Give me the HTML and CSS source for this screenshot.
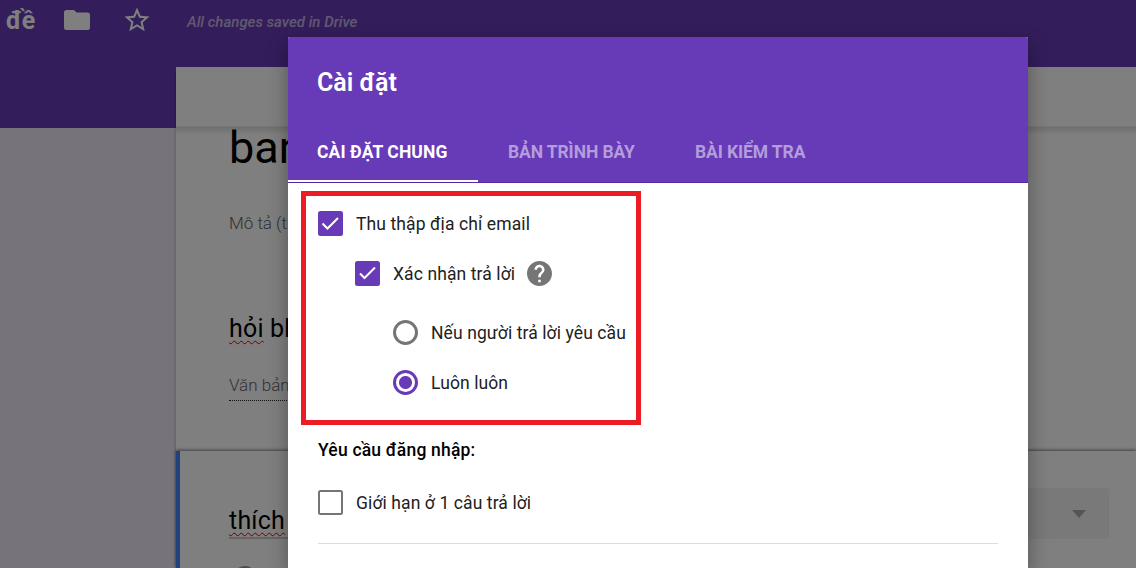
FILE: index.html
```html
<!DOCTYPE html>
<html lang="vi">
<head>
  <meta charset="utf-8">
  <meta name="viewport" content="width=device-width">
  <title>Cài đặt</title>
  <link rel="stylesheet" href="styles.css">
</head>
<body>
  <div class="page">
    <header class="topbar">
      <span class="doc-title">đề</span>
      <svg class="folder" width="26" height="21" viewBox="0 0 26 21">
        <path d="M2.5 0H10l2.6 2.6h10.9A2.5 2.5 0 0 1 26 5.1v12.400a2.5 2.5 0 0 1-2.5 2.5h-21A2.5 2.5 0 0 1 0 17.500V2.500A2.500 2.500 0 0 1 2.500 0z"/>
      </svg>
      <svg class="star" width="30" height="30" viewBox="0 0 24 24">
        <path d="M22 9.240l-7.190-.620L12 2 9.190 8.630 2 9.240l5.460 4.730L5.820 21 12 17.270 18.180 21l-1.630-7.030L22 9.240zM12 15.400l-3.760 2.270 1-4.280-3.320-2.880 4.380-.380L12 6.100l1.710 4.040 4.380.380-3.320 2.880 1 4.280L12 15.400z"/>
      </svg>
      <span class="saved">All changes saved in Drive</span>
    </header>
    <div class="main">
      <div class="side"></div>
      <div class="form">
        <div class="form-tabs"></div>
        <section class="form-head">
          <h1>ban</h1>
          <p class="desc">Mô tả (tùy</p>
          <p class="question"><span class="typo">hỏi</span> bha</p>
          <p class="answer">Văn bản</p>
        </section>
        <section class="card">
          <p class="question"><span class="typo">thích</span></p>
          <div class="select"><i class="caret"></i></div>
        </section>
      </div>
    </div>
  </div>

  <div class="overlay">
    <div class="dialog">
      <div class="dialog-header">
        <h2>Cài đặt</h2>
        <nav class="tabs">
          <span class="tab active">CÀI ĐẶT CHUNG</span>
          <span class="tab">BẢN TRÌNH BÀY</span>
          <span class="tab">BÀI KIỂM TRA</span>
        </nav>
      </div>
      <div class="dialog-body">
        <div class="highlight">
          <div class="row">
            <svg class="checkbox checked" viewBox="0 0 25 25"><path d="M4.500 12.500l5 5L20 7"/></svg>
            <span class="label">Thu thập địa chỉ email</span>
          </div>
          <div class="row level-2">
            <svg class="checkbox checked" viewBox="0 0 25 25"><path d="M5 12.500l4.500 4.500L20 6.500"/></svg>
            <span class="label">Xác nhận trả lời</span>
            <svg class="help" viewBox="2 2 20 20">
              <path d="M12 2C6.480 2 2 6.480 2 12s4.480 10 10 10 10-4.480 10-10S17.520 2 12 2zm1 17h-2v-2h2v2zm2.070-7.750l-.9.920C13.450 12.900 13 13.500 13 15h-2v-.5c0-1.100.45-2.100 1.170-2.830l1.240-1.260c.37-.36.59-.86.59-1.410 0-1.100-.9-2-2-2s-2 .9-2 2H8c0-2.210 1.790-4 4-4s4 1.790 4 4c0 .88-.36 1.680-.93 2.250z"/>
            </svg>
          </div>
          <div class="row level-3">
            <span class="radio"></span>
            <span class="label">Nếu người trả lời yêu cầu</span>
          </div>
          <div class="row level-3">
            <span class="radio selected"></span>
            <span class="label">Luôn luôn</span>
          </div>
        </div>
        <h3>Yêu cầu đăng nhập:</h3>
        <div class="row limit">
          <span class="checkbox empty"></span>
          <span class="label">Giới hạn ở 1 câu trả lời</span>
        </div>
        <hr>
      </div>
    </div>
  </div>
</body>
</html>
```
FILE: styles.css
```css
*{
  box-sizing:border-box;
}
body{
  margin:0;
  height:568px;
  overflow:hidden;
  position:relative;
  font-family:Roboto, "Liberation Sans", sans-serif;
}
h1, h2, h3, p{
  margin:0;
}
svg{
  display:block;
  flex:none;
}

/* page behind the dialog */
.page{
  height:568px;
  overflow:hidden;
  background-color:#ede7f6;
}
.topbar{
  height:67px;
  background-color:#673ab7;
  color:#fff;
  fill:#fff;
  display:flex;
  align-items:flex-start;
}
.doc-title{
  width:58px;
  margin-left:6px;
  margin-top:6px;
  font-size:25px;
  line-height:30px;
  font-weight:700;
}
.folder{
  margin-top:10px;
}
.star{
  margin-left:32px;
  margin-top:5px;
}
.saved{
  margin-left:35px;
  margin-top:12px;
  font-size:15px;
  line-height:21px;
  font-style:italic;
  font-weight:500;
  opacity:.6;
}
.main{
  display:flex;
}
.side{
  width:176px;
  height:61px;
  background-color:#673ab7;
}
.form{
  flex:1;
  height:501px;
  background-color:#fff;
  box-shadow:0 4px 3px rgba(0,0,0,.3);
}
.form-tabs{
  height:60px;
  border-bottom:1px solid #ececec;
}
.form-head{
  height:324px;
  padding-left:53px;
  background:linear-gradient(#dedede, #fff 8px);
}
h1{
  height:84px;
  font-size:45px;
  line-height:42px;
  font-weight:400;
}
.desc, .answer{
  font-size:17px;
  line-height:24px;
  font-weight:300;
  color:#666;
}
.question{
  font-size:25px;
  line-height:32px;
  letter-spacing:.2px;
}
.desc + .question{
  margin-top:78px;
}
.answer{
  width:300px;
  height:28px;
  margin-top:28px;
  border-bottom:1px dotted #222;
}
.typo{
  text-decoration:underline wavy #e00000 1px;
  text-underline-offset:3px;
  text-decoration-skip-ink:none;
}
.card{
  height:117px;
  padding:37px 27px 0 49px;
  border-left:4px solid #4285f4;
  box-shadow:0 -1px 3px rgba(0,0,0,.5);
  display:grid;
  grid-template-columns:400px 1fr;
}
.card .question{
  margin-top:17px;
  height:34px;
  border-bottom:2px solid #ccc;
}
.select{
  height:51px;
  background-color:#f3f3f3;
  border-radius:3px;
  display:flex;
  justify-content:flex-end;
  padding:22px 23px 0 0;
}
.caret{
  width:0;
  height:0;
  border:7.5px solid transparent;
  border-top:8px solid #aaa;
}
.card::after{
  content:"";
  width:20px;
  height:20px;
  margin:27px 0 0 4px;
  border:2px solid #999;
  border-radius:50%;
}

/* settings dialog */
.overlay{
  position:absolute;
  inset:0;
  overflow:hidden;
  padding:37px 0 0 288px;
  background-color:rgba(0,0,0,.5);
}
.dialog{
  width:740px;
  height:531px;
  background-color:#fff;
  border-radius:2px 2px 0 0;
  box-shadow:0 8px 20px rgba(0,0,0,.35);
}
.dialog-header{
  height:146px;
  background-color:#673ab7;
  border-radius:2px 2px 0 0;
  border-bottom:1px solid #5529a5;
  color:#fff;
}
h2{
  height:85px;
  padding:31px 0 0 29px;
  font-size:25px;
  line-height:30px;
  font-weight:600;
}
.tabs{
  height:60px;
  display:flex;
}
.tab{
  padding:0 30px;
  font-size:17.5px;
  line-height:60px;
  font-weight:700;
  letter-spacing:-.1px;
  white-space:nowrap;
  color:#b39ddb;
}
.tab:nth-child(2){
  width:187px;
}
.tab.active{
  width:190px;
  padding-left:29px;
  letter-spacing:.1px;
  color:#fff;
  border-bottom:2px solid #fff;
}
.dialog-body{
  padding:8px 30px 0;
}
.highlight{
  width:340px;
  height:234px;
  margin-left:-17px;
  padding:15px 0 0 12px;
  border:5px solid #ed1c24;
}
.row{
  height:25px;
  margin-bottom:25px;
  display:flex;
  align-items:center;
  gap:13px;
  font-size:17.5px;
  line-height:25px;
  color:#212121;
  white-space:nowrap;
}
.label{
  padding-top:2px;
  letter-spacing:.1px;
}
.level-2{
  margin-bottom:34px;
  padding-left:37px;
}
.level-3{
  padding-left:75px;
}
.checkbox{
  flex:none;
  width:25px;
  height:25px;
  border-radius:2.5px;
}
.checked{
  background-color:#673ab7;
  fill:none;
  stroke:#fff;
  stroke-width:2;
}
.empty{
  border:2.5px solid #757575;
}
.help{
  width:25px;
  height:25px;
  margin-left:-1px;
  fill:#757575;
}
.radio{
  flex:none;
  width:25px;
  height:25px;
  border:3px solid #757575;
  border-radius:50%;
}
.radio.selected{
  border-color:#673ab7;
  background:radial-gradient(circle, #673ab7 6px, #fff 7px);
}
h3{
  margin-top:13px;
  font-size:17.5px;
  line-height:25px;
  font-weight:500;
  letter-spacing:.2px;
}
.limit{
  margin:27px 0 28px;
}
hr{
  margin:0;
  border:0;
  border-top:1px solid #dcdcdc;
}
```
